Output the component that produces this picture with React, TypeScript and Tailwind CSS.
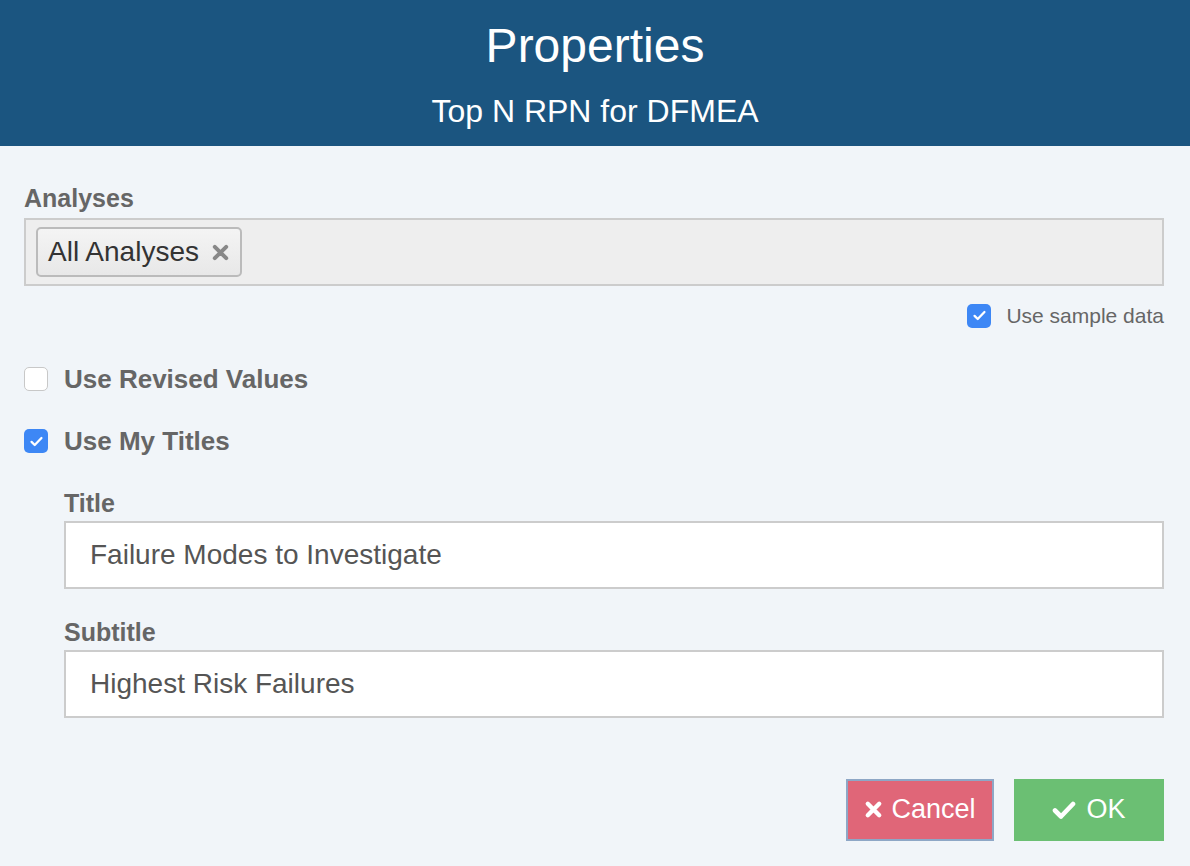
import React from "react";

const Check: React.FC<{ checked: boolean }> = ({ checked }) =>
	checked ? (
		<span className="flex h-[24px] w-[24px] shrink-0 items-center justify-center rounded-[5px] bg-[#3d87f5]">
			<svg viewBox="0 0 24 24" className="h-[17px] w-[17px]" fill="none" stroke="white" strokeWidth="3.2" strokeLinecap="round" strokeLinejoin="round">
				<path d="M5 12.5l4.5 4.5L19 7" />
			</svg>
		</span>
	) : (
		<span className="h-[24px] w-[24px] shrink-0 rounded-[5px] border border-[#c8c8c8] bg-white"></span>
	);

const TextField: React.FC<{ label: string; value: string }> = ({ label, value }) => (
	<div className="flex flex-col">
		<label className="mb-[4px] text-[25px] font-bold leading-[28px] text-[#666]">{label}</label>
		<div className="flex h-[68px] items-center border-2 border-[#ccc] bg-white px-[24px] text-[28px] text-[#555]">
			{value}
		</div>
	</div>
);

export default function App() {
	return (
		<div className="flex min-h-[866px] w-full flex-col bg-[#f1f5f9] font-['Liberation_Sans',Arial,sans-serif]">
			<div className="flex h-[146px] flex-col items-center bg-[#1b5580] text-white">
				<h1 className="mt-[18px] text-[48px] leading-[56px]">Properties</h1>
				<h2 className="mt-[18px] text-[32px] leading-[38px]">Top N RPN for DFMEA</h2>
			</div>

			<div className="flex flex-col pl-[24px] pr-[26px] pt-[36px]">
				<label className="mb-[4px] text-[25px] font-bold leading-[32px] text-[#666]">Analyses</label>
				<div className="flex h-[68px] items-center border-2 border-[#ccc] bg-[#eee] px-[10px]">
					<div className="flex h-[50px] items-center gap-[12px] rounded-[5px] border-2 border-[#bbb] bg-gradient-to-b from-[#f4f4f4] to-[#e8e8e8] pl-[10px] pr-[10px] text-[28px] text-[#333]">
						<span>All Analyses</span>
						<svg viewBox="0 0 20 20" className="h-[19px] w-[19px]">
							<path d="M4 4L16 16M16 4L4 16" stroke="#888" strokeWidth="4.2" strokeLinecap="round" />
						</svg>
					</div>
				</div>

				<div className="mt-[14px] flex items-center justify-end gap-[15px]">
					<Check checked />
					<span className="text-[21px] text-[#666]">Use sample data</span>
				</div>

				<div className="mt-[28px] flex items-center gap-[16px]">
					<Check checked={false} />
					<span className="text-[26px] font-bold text-[#666]">Use Revised Values</span>
				</div>

				<div className="mt-[23px] flex items-center gap-[16px]">
					<Check checked />
					<span className="text-[26px] font-bold text-[#666]">Use My Titles</span>
				</div>

				<div className="ml-[40px] mt-[28px] flex flex-col gap-[29px]">
					<TextField label="Title" value="Failure Modes to Investigate" />
					<TextField label="Subtitle" value="Highest Risk Failures" />
				</div>

				<div className="mt-[61px] flex justify-end gap-[20px]">
					<button className="flex h-[62px] w-[148px] items-center justify-center gap-[8px] border-2 border-[#8ea7c6] bg-[#e06678] text-[27px] text-white">
						<svg viewBox="0 0 20 20" className="h-[19px] w-[19px]">
							<path d="M4 4L16 16M16 4L4 16" stroke="white" strokeWidth="4.6" strokeLinecap="round" />
						</svg>
						Cancel
					</button>
					<button className="flex h-[62px] w-[150px] items-center justify-center gap-[10px] bg-[#6bbf73] text-[27px] text-white">
						<svg viewBox="0 0 24 20" className="h-[20px] w-[24px]">
							<path d="M3 10.5l6 6L21 4" fill="none" stroke="white" strokeWidth="4.6" strokeLinecap="round" strokeLinejoin="round" />
						</svg>
						OK
					</button>
				</div>
			</div>
		</div>
	);
}
